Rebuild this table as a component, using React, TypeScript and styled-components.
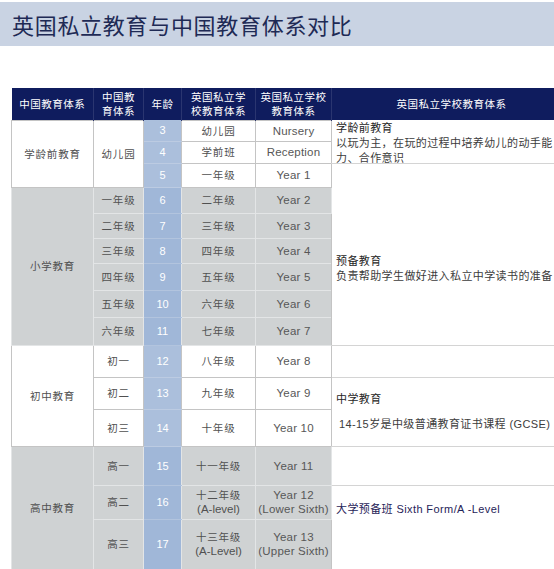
import React from "react";
import styled, { createGlobalStyle } from "styled-components";

const GlobalStyle = createGlobalStyle`
  html, body {
    margin: 0;
    padding: 0;
    background: #ffffff;
  }
  body {
    font-family: "Liberation Sans", "Noto Sans CJK SC", sans-serif;
  }
`;

const Page = styled.div`
  width: 554px;
  height: 569px;
  overflow: hidden;
  padding-top: 2px;
  box-sizing: border-box;
`;

const TitleBar = styled.header`
  height: 44px;
  background: #c9d3e3;
  display: flex;
  align-items: center;
  padding-left: 12px;
`;

const Title = styled.h1`
  margin: 0;
  font-family: "Noto Sans CJK SC", sans-serif;
  font-weight: 400;
  font-size: 22px;
  letter-spacing: 0.7px;
  color: #1e2a55;
`;

const Table = styled.table`
  margin: 42px 0 0 11px;
  width: 560px;
  border-collapse: collapse;
  table-layout: fixed;
`;

const HeadCell = styled.th`
  background: #0f1c5e;
  color: #ffffff;
  font-family: "Noto Sans CJK SC", sans-serif;
  font-weight: 400;
  font-size: 10.5px;
  line-height: 14px;
  letter-spacing: 0.5px;
  text-align: center;
  border-right: 1px solid #2a3570;
  padding: 0 2px;
`;

const Row = styled.tr<{ $h: number }>`
  height: ${(p) => p.$h}px;
`;

type Tone = "white" | "gray";

const Cell = styled.td<{ $tone: Tone }>`
  background: ${(p) => (p.$tone === "gray" ? "#cfd2d3" : "#ffffff")};
  border: 1px solid ${(p) => (p.$tone === "gray" ? "#e3e5e6" : "#c4c4c4")};
  color: #575757;
  font-size: 11.5px;
  line-height: 14px;
  text-align: center;
  vertical-align: middle;
  padding: 0;
  letter-spacing: 0.2px;
`;

const CnCell = styled(Cell)`
  font-family: "Noto Sans CJK SC", sans-serif;
  font-size: 10.5px;
  letter-spacing: 0.8px;
  color: #505050;
  & small {
    font-family: "Liberation Sans", sans-serif;
    font-size: 11.5px;
    letter-spacing: 0;
  }
`;

const AgeCell = styled.td<{ $tone: Tone }>`
  background: ${(p) => (p.$tone === "gray" ? "#a0b7d8" : "#abbfdc")};
  border-bottom: 1px solid ${(p) => (p.$tone === "gray" ? "#b2c4de" : "#bccbe2")};
  color: #ffffff;
  font-size: 11px;
  text-align: center;
  vertical-align: middle;
  padding: 0;
`;

const DescCell = styled.td<{ $open?: boolean; $top?: number }>`
  background: #ffffff;
  border-left: 1px solid #c4c4c4;
  border-bottom: ${(p) => (p.$open ? "none" : "1px solid #d4d4d4")};
  vertical-align: top;
  padding: ${(p) => p.$top ?? 0}px 0 0 4px;
  font-family: "Liberation Sans", "Noto Sans CJK SC", sans-serif;
  font-size: 11px;
  line-height: 15px;
  letter-spacing: 0.4px;
  color: #3c3c3c;
`;

const DescBox = styled.div<{ $h: number }>`
  height: ${(p) => p.$h}px;
  overflow: visible;
`;

const DescHead = styled.div<{ $navy?: boolean }>`
  color: ${(p) => (p.$navy ? "#1f2358" : "#262626")};
`;

const DescLine = styled.div<{ $gap?: number; $indent?: number }>`
  margin-top: ${(p) => p.$gap ?? 0}px;
  padding-left: ${(p) => p.$indent ?? 0}px;
`;

const headers = [
  { w: 82, t: "中国教育体系" },
  { w: 50, t: "中国教\n育体系" },
  { w: 38, t: "年龄" },
  { w: 74, t: "英国私立学\n校教育体系" },
  { w: 76, t: "英国私立学校\n教育体系" },
  { w: 240, t: "英国私立学校教育体系" },
];

const multi = (s: string) =>
  s.split("\n").map((l, i) => (
    <React.Fragment key={i}>
      {i > 0 && <br />}
      {l}
    </React.Fragment>
  ));

const primary = [
  { cn: "一年级", age: 6, uk: "二年级", en: "Year 2", h: 26 },
  { cn: "二年级", age: 7, uk: "三年级", en: "Year 3", h: 25 },
  { cn: "三年级", age: 8, uk: "四年级", en: "Year 4", h: 25 },
  { cn: "四年级", age: 9, uk: "五年级", en: "Year 5", h: 27 },
  { cn: "五年级", age: 10, uk: "六年级", en: "Year 6", h: 27 },
  { cn: "六年级", age: 11, uk: "七年级", en: "Year 7", h: 28 },
];

export default function App() {
  return (
    <Page>
      <GlobalStyle />
      <TitleBar>
        <Title>英国私立教育与中国教育体系对比</Title>
      </TitleBar>
      <Table>
        <colgroup>
          {headers.map((h, i) => (
            <col key={i} style={{ width: h.w }} />
          ))}
        </colgroup>
        <thead>
          <Row $h={32}>
            {headers.map((h, i) => (
              <HeadCell key={i}>{multi(h.t)}</HeadCell>
            ))}
          </Row>
        </thead>
        <tbody>
          {/* 学龄前 */}
          <Row $h={21}>
            <CnCell $tone="white" rowSpan={3}>学龄前教育</CnCell>
            <CnCell $tone="white" rowSpan={3}>幼儿园</CnCell>
            <AgeCell $tone="white">3</AgeCell>
            <CnCell $tone="white">幼儿园</CnCell>
            <Cell $tone="white">Nursery</Cell>
            <DescCell rowSpan={2} $top={1}>
              <DescBox $h={40}>
                <DescHead>学龄前教育</DescHead>
                <DescLine>以玩为主，在玩的过程中培养幼儿的动手能</DescLine>
                <DescLine>力、合作意识</DescLine>
              </DescBox>
            </DescCell>
          </Row>
          <Row $h={22}>
            <AgeCell $tone="white">4</AgeCell>
            <CnCell $tone="white">学前班</CnCell>
            <Cell $tone="white">Reception</Cell>
          </Row>
          <Row $h={24}>
            <AgeCell $tone="white">5</AgeCell>
            <CnCell $tone="white">一年级</CnCell>
            <Cell $tone="white">Year 1</Cell>
            <DescCell $open />
          </Row>

          {/* 小学 */}
          {primary.map((r, i) => (
            <Row $h={r.h} key={r.age}>
              {i === 0 && (
                <CnCell $tone="gray" rowSpan={6}>
                  小学教育
                </CnCell>
              )}
              <CnCell $tone="gray">{r.cn}</CnCell>
              <AgeCell $tone="gray">{r.age}</AgeCell>
              <CnCell $tone="gray">{r.uk}</CnCell>
              <Cell $tone="gray">{r.en}</Cell>
              {i === 0 && (
                <DescCell rowSpan={6} $top={67}>
                  <DescHead>预备教育</DescHead>
                  <DescLine>负责帮助学生做好进入私立中学读书的准备</DescLine>
                </DescCell>
              )}
            </Row>
          ))}

          {/* 初中 */}
          <Row $h={32}>
            <CnCell $tone="white" rowSpan={3}>初中教育</CnCell>
            <CnCell $tone="white">初一</CnCell>
            <AgeCell $tone="white">12</AgeCell>
            <CnCell $tone="white">八年级</CnCell>
            <Cell $tone="white">Year 8</Cell>
            <DescCell />
          </Row>
          <Row $h={32}>
            <CnCell $tone="white">初二</CnCell>
            <AgeCell $tone="white">13</AgeCell>
            <CnCell $tone="white">九年级</CnCell>
            <Cell $tone="white">Year 9</Cell>
            <DescCell rowSpan={2} $top={14}>
              <DescHead>中学教育</DescHead>
              <DescLine $gap={10} $indent={3}>
                14-15岁是中级普通教育证书课程 (GCSE)
              </DescLine>
            </DescCell>
          </Row>
          <Row $h={37}>
            <CnCell $tone="white">初三</CnCell>
            <AgeCell $tone="white">14</AgeCell>
            <CnCell $tone="white">十年级</CnCell>
            <Cell $tone="white">Year 10</Cell>
          </Row>

          {/* 高中 */}
          <Row $h={39}>
            <CnCell $tone="gray" rowSpan={3}>高中教育</CnCell>
            <CnCell $tone="gray">高一</CnCell>
            <AgeCell $tone="gray">15</AgeCell>
            <CnCell $tone="gray">十一年级</CnCell>
            <Cell $tone="gray">Year 11</Cell>
            <DescCell />
          </Row>
          <Row $h={34}>
            <CnCell $tone="gray">高二</CnCell>
            <AgeCell $tone="gray">16</AgeCell>
            <CnCell $tone="gray">
              十二年级
              <br />
              <small>(A-level)</small>
            </CnCell>
            <Cell $tone="gray">
              Year 12
              <br />
              (Lower Sixth)
            </Cell>
            <DescCell rowSpan={2} $top={16}>
              <DescHead $navy>大学预备班 Sixth Form/A -Level</DescHead>
            </DescCell>
          </Row>
          <Row $h={50}>
            <CnCell $tone="gray">高三</CnCell>
            <AgeCell $tone="gray">17</AgeCell>
            <CnCell $tone="gray">
              十三年级
              <br />
              <small>(A-Level)</small>
            </CnCell>
            <Cell $tone="gray">
              Year 13
              <br />
              (Upper Sixth)
            </Cell>
          </Row>
        </tbody>
      </Table>
    </Page>
  );
}
